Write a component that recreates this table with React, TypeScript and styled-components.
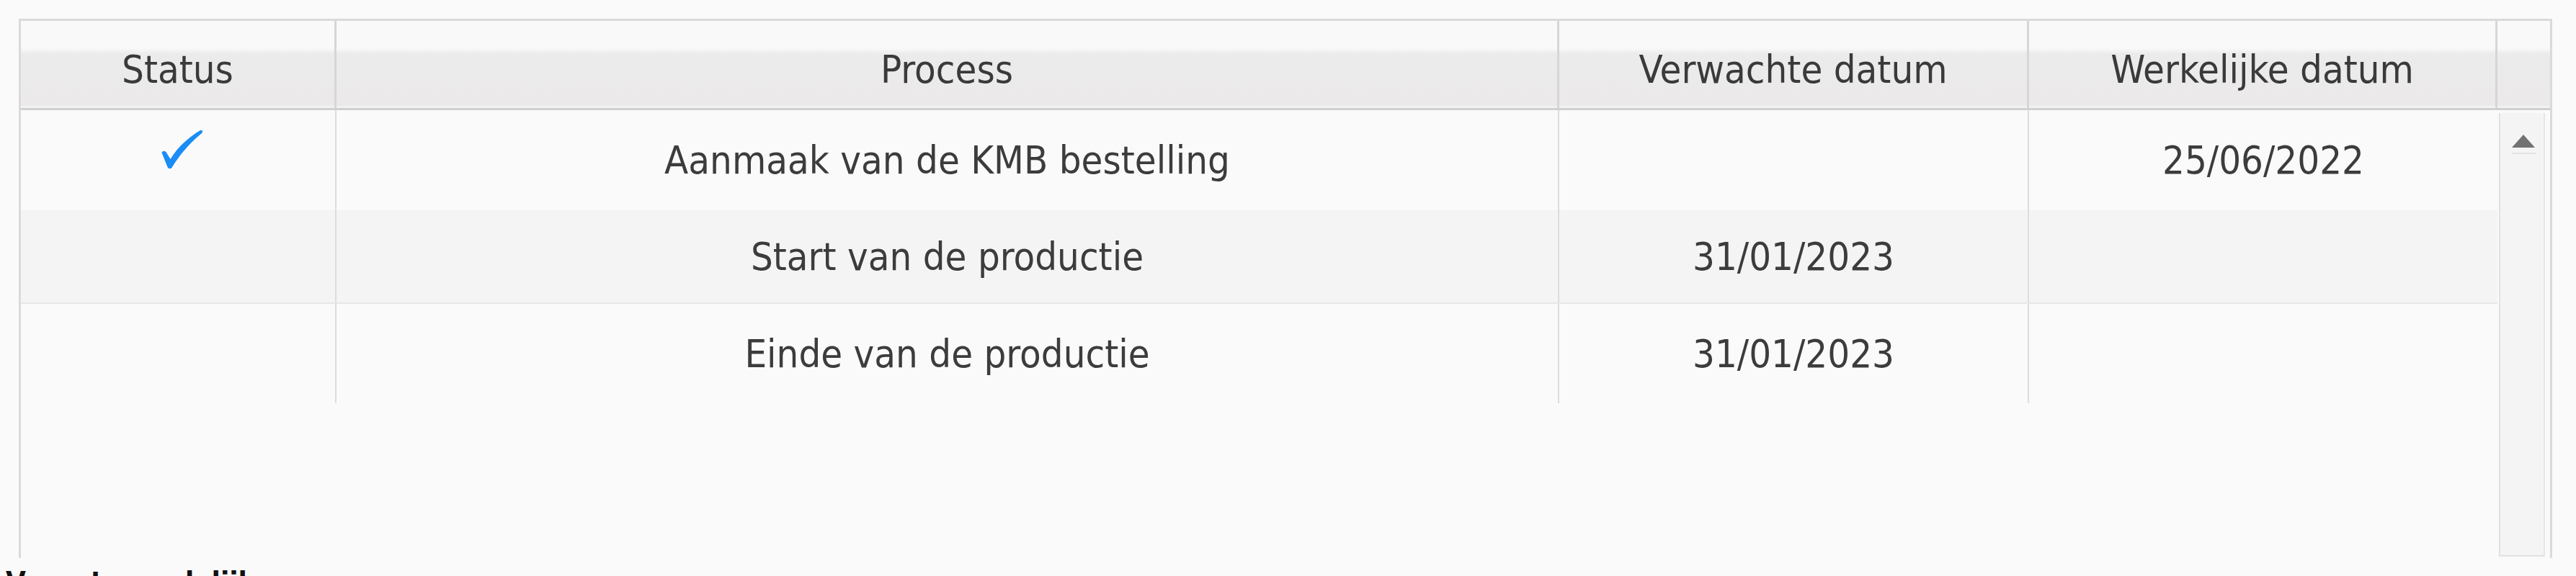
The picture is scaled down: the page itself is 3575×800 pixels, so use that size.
import styled, { createGlobalStyle } from "styled-components";

interface Step
{
    done: boolean;
    process: string;
    expected: string;
    actual: string;
    height: number;
    shaded?: boolean;
}

const steps: Step[] = [
    { done: true, process: "Aanmaak van de KMB bestelling", expected: "", actual: "25/06/2022", height: 139 },
    { done: false, process: "Start van de productie", expected: "31/01/2023", actual: "", height: 130, shaded: true },
    { done: false, process: "Einde van de productie", expected: "31/01/2023", actual: "", height: 138 },
];

const columns = "438px 1697px 652px 650px";

const GlobalStyle = createGlobalStyle`
    body {
        margin: 0;
        background: #fafafa;
        font-family: "DejaVu Sans Condensed", "DejaVu Sans", sans-serif;
    }
`;

const Page = styled.div`
    height: 800px;
    overflow: hidden;
    box-sizing: border-box;
    padding: 26px 0 0 8px;
`;

const GridBox = styled.div`
    display: flex;
    flex-direction: column;
    width: 3516px;
    height: 749px;
    margin-left: 18px;
    box-sizing: border-box;
    border: 3px solid #dadada;
    border-bottom: none;
    background: #fafafa;
`;

const HeaderRow = styled.div`
    display: grid;
    grid-template-columns: ${columns} 1fr;
    height: 124px;
    box-sizing: border-box;
    border-bottom: 3px solid #d0d0d0;
`;

const HeaderCell = styled.div<{ $last?: boolean }>`
    display: flex;
    align-items: center;
    justify-content: center;
    padding-top: 14px;
    box-sizing: border-box;
    background: linear-gradient(to bottom, #f9f9f9 0, #f9f9f9 38px, #ecebeb 46px, #ebe9ea 100%);
    box-shadow: inset 0 -3px 0 #f3f2f2;
    border-right: ${p => p.$last ? "none" : "3px solid #d6d6d6"};
    font-size: 54px;
    color: #3a3a3a;
    white-space: nowrap;
`;

const Body = styled.div`
    display: flex;
    flex: 1;
    min-height: 0;
`;

const RowsArea = styled.div`
    display: flex;
    flex-direction: column;
    width: 3437px;
`;

const Row = styled.div<{ $height: number; $shaded?: boolean }>`
    display: grid;
    grid-template-columns: ${columns};
    height: ${p => p.$height}px;
    box-sizing: border-box;
    background: ${p => p.$shaded ? "#f4f4f4" : "transparent"};
    border-bottom: ${p => p.$shaded ? "2px solid #e7e7e7" : "none"};
`;

const Cell = styled.div<{ $divider?: boolean }>`
    display: flex;
    align-items: center;
    justify-content: center;
    border-right: ${p => p.$divider ? "2px solid #dddddd" : "none"};
    font-size: 54px;
    color: #3c3c3c;
    white-space: nowrap;
`;

const StatusCell = styled(Cell)`
    align-items: flex-start;
    padding-top: 27px;

    svg {
        margin-left: 12px;
    }
`;

const ScrollTrack = styled.div`
    display: flex;
    flex-direction: column;
    align-items: center;
    width: 64px;
    margin: 4px 7px 2px 2px;
    box-sizing: border-box;
    background: #f4f4f4;
    border-left: 2px solid #e1e1e1;
    border-right: 2px solid #e6e6e6;
    border-bottom: 2px solid #e1e1e1;
`;

const UpArrow = styled.div`
    width: 0;
    height: 0;
    margin-top: 30px;
    margin-left: 4px;
    border-left: 16px solid transparent;
    border-right: 16px solid transparent;
    border-bottom: 18px solid #727272;
`;

const ArrowBase = styled.div`
    width: 33px;
    height: 2px;
    margin-top: 7px;
    margin-left: 4px;
    background: #e2e2e2;
`;

const Heading = styled.h2`
    margin: 11px 0 0 0;
    font-size: 40px;
    font-weight: bold;
    line-height: normal;
    color: #111111;
`;

const CheckMark = () => (
    <svg width="58" height="55" viewBox="0 0 58 55">
        <path
            d="M0.5 32 C2 29 5 29 7 32 L12.5 41 C22 25 37 11 54 1 C57 0 58 3 56 5 C40 18 26 34 15 52 C13.5 55 10 55 8.5 52 Z"
            fill="#1a8cf5"
        />
    </svg>
);

const App = () =>
{
    return (
        <Page>
            <GlobalStyle />
            <GridBox>
                <HeaderRow>
                    <HeaderCell>Status</HeaderCell>
                    <HeaderCell>Process</HeaderCell>
                    <HeaderCell>Verwachte datum</HeaderCell>
                    <HeaderCell>Werkelijke datum</HeaderCell>
                    <HeaderCell $last />
                </HeaderRow>
                <Body>
                    <RowsArea>
                        {steps.map( step =>
                        {
                            return (
                                <Row key={step.process} $height={step.height} $shaded={step.shaded}>
                                    <StatusCell $divider>{step.done && <CheckMark />}</StatusCell>
                                    <Cell $divider>{step.process}</Cell>
                                    <Cell $divider>{step.expected}</Cell>
                                    <Cell>{step.actual}</Cell>
                                </Row>
                            );
                        } )}
                    </RowsArea>
                    <ScrollTrack>
                        <UpArrow />
                        <ArrowBase />
                    </ScrollTrack>
                </Body>
            </GridBox>
            <Heading>Verantwoordelijke</Heading>
        </Page>
    );
};

export default App;
